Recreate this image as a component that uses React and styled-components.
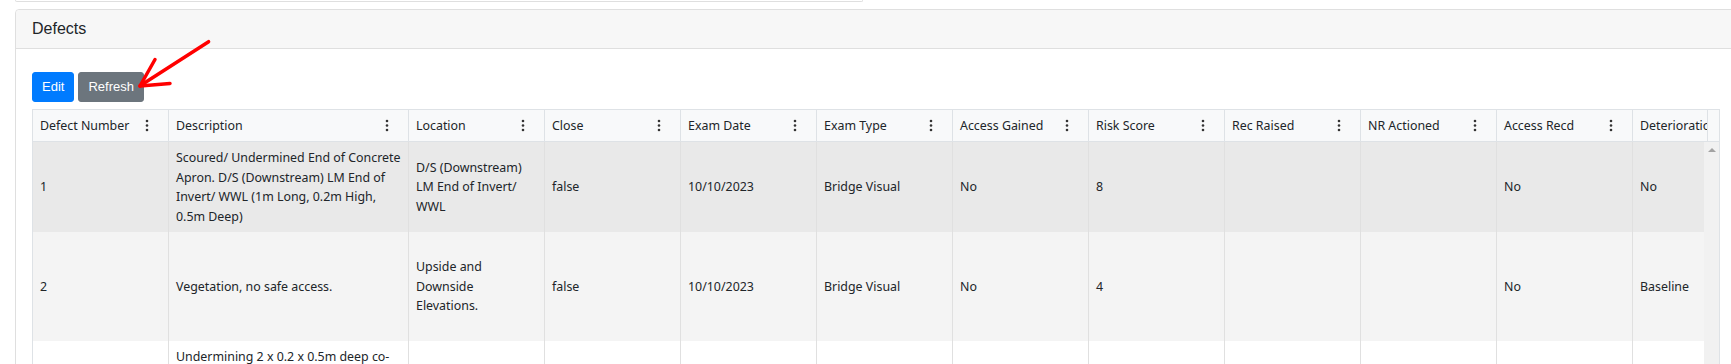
import React from "react";
import styled, { createGlobalStyle } from "styled-components";

const GlobalStyle = createGlobalStyle`
  * {
    box-sizing: border-box;
    margin: 0;
    padding: 0;
  }
  html, body {
    background: #fff;
    overflow: hidden;
  }
`;

const Page = styled.div`
  position: relative;
  width: 1731px;
  height: 364px;
  overflow: hidden;
  color: #212529;
`;

const TopStub = styled.div`
  width: 848px;
  height: 2px;
  margin-left: 15px;
  border: 1px solid #dfdfdf;
  border-top: 0;
  border-radius: 0 0 4px 4px;
`;

const Card = styled.section`
  width: 1722px;
  margin: 7px 0 0 15px;
  border: 1px solid #dfdfdf;
  border-radius: 4px;
`;

const CardHeader = styled.div`
  background: #f7f7f7;
  border-bottom: 1px solid #dfdfdf;
  border-radius: 4px 4px 0 0;
  padding: 7px 16px;
  font-family: "Liberation Sans", Arial, sans-serif;
  font-size: 16px;
  line-height: 24px;
`;

const CardBody = styled.div`
  padding: 23px 16px 0 16px;
`;

const Toolbar = styled.div`
  display: flex;
  gap: 4px;
  margin-bottom: 7px;
`;

const Button = styled.button`
  font-family: "Liberation Sans", Arial, sans-serif;
  font-size: 13px;
  line-height: 20px;
  padding: 4px 9px;
  border-radius: 3px;
  color: #fff;
  border: 1px solid ${(p) => (p.$variant === "primary" ? "#007bff" : "#6c757d")};
  background: ${(p) => (p.$variant === "primary" ? "#007bff" : "#6c757d")};
  cursor: pointer;
`;

const Grid = styled.div`
  border: 1px solid #dee2e6;
  font-family: "Noto Sans", "Open Sans", sans-serif;
  font-size: 12.4px;
  color: #212529;
`;

const HeaderRow = styled.div`
  display: flex;
  height: 32px;
  background: #f8f9fa;
  border-bottom: 1px solid #dee2e6;
`;

const HeaderScroll = styled.div`
  flex: 1;
  display: flex;
  overflow: hidden;
`;

const HeaderGutter = styled.div`
  flex: 0 0 12px;
  border-left: 1px solid #dee2e6;
`;

const HeaderCell = styled.div`
  flex: 0 0 ${(p) => p.$width}px;
  display: flex;
  align-items: center;
  justify-content: space-between;
  padding: 0 19px 0 7px;
  border-right: 1px solid #dee2e6;
  white-space: nowrap;
  overflow: hidden;
`;

const MenuDots = styled.svg`
  flex: 0 0 4px;
  width: 4px;
  height: 13px;
`;

const Body = styled.div`
  display: flex;
`;

const Rows = styled.div`
  flex: 1;
  overflow: hidden;
`;

const Row = styled.div`
  display: flex;
  min-height: ${(p) => p.$height}px;
  background: ${(p) => p.$bg};
`;

const Cell = styled.div`
  flex: 0 0 ${(p) => p.$width}px;
  display: flex;
  flex-direction: column;
  justify-content: center;
  padding: 6px 7px;
  line-height: 19.5px;
  border-right: 1px solid #e0e0e0;
  white-space: nowrap;
  overflow: hidden;
`;

const Scrollbar = styled.div`
  flex: 0 0 15px;
  background: #f1f1f1;
  display: flex;
  justify-content: center;
  padding-top: 6px;
  &::before {
    content: "";
    width: 0;
    height: 0;
    border-left: 4px solid transparent;
    border-right: 4px solid transparent;
    border-bottom: 4px solid #a3a3a3;
  }
`;

const Arrow = styled.svg`
  position: absolute;
  left: 0;
  top: 0;
  width: 240px;
  height: 110px;
  pointer-events: none;
`;

const columns = [
  { key: "num", label: "Defect Number", width: 136 },
  { key: "desc", label: "Description", width: 240 },
  { key: "loc", label: "Location", width: 136 },
  { key: "close", label: "Close", width: 136 },
  { key: "examDate", label: "Exam Date", width: 136 },
  { key: "examType", label: "Exam Type", width: 136 },
  { key: "accessGained", label: "Access Gained", width: 136 },
  { key: "risk", label: "Risk Score", width: 136 },
  { key: "recRaised", label: "Rec Raised", width: 136 },
  { key: "nrActioned", label: "NR Actioned", width: 136 },
  { key: "accessRecd", label: "Access Recd", width: 136 },
  { key: "deterioration", label: "Deterioration", width: 136 },
];

// only what shows in the visible part of the grid
const defects = [
  {
    height: 90,
    bg: "#e9e9e9",
    num: "1",
    desc: [
      "Scoured/ Undermined End of Concrete",
      "Apron. D/S (Downstream) LM End of",
      "Invert/ WWL (1m Long, 0.2m High,",
      "0.5m Deep)",
    ],
    loc: ["D/S (Downstream)", "LM End of Invert/", "WWL"],
    close: "false",
    examDate: "10/10/2023",
    examType: "Bridge Visual",
    accessGained: "No",
    risk: "8",
    accessRecd: "No",
    deterioration: "No",
  },
  {
    height: 109,
    bg: "#f4f4f4",
    num: "2",
    desc: ["Vegetation, no safe access."],
    loc: ["Upside and", "Downside", "Elevations."],
    close: "false",
    examDate: "10/10/2023",
    examType: "Bridge Visual",
    accessGained: "No",
    risk: "4",
    accessRecd: "No",
    deterioration: "Baseline",
  },
  {
    height: 0,
    bg: "#ffffff",
    desc: ["Undermining 2 x 0.2 x 0.5m deep co-"],
  },
];

const Dots = () => (
  <MenuDots viewBox="0 0 4 13">
    <circle cx="2" cy="2" r="1.3" fill="#333" />
    <circle cx="2" cy="6.5" r="1.3" fill="#333" />
    <circle cx="2" cy="11" r="1.3" fill="#333" />
  </MenuDots>
);

const renderValue = (value) => {
  if (!value) return null;
  return Array.isArray(value)
    ? value.map((line, i) => <span key={i}>{line}</span>)
    : <span>{value}</span>;
};

export default function App() {
  return (
    <Page>
      <GlobalStyle />
      <TopStub />
      <Card>
        <CardHeader>Defects</CardHeader>
        <CardBody>
          <Toolbar>
            <Button $variant="primary">Edit</Button>
            <Button $variant="secondary">Refresh</Button>
          </Toolbar>

          <Grid>
            <HeaderRow>
              <HeaderScroll>
                {columns.map((col) => (
                  <HeaderCell key={col.key} $width={col.width}>
                    <span>{col.label}</span>
                    {col.key !== "deterioration" && <Dots />}
                  </HeaderCell>
                ))}
              </HeaderScroll>
              <HeaderGutter />
            </HeaderRow>

            <Body>
              <Rows>
                {defects.map((item, id) => (
                  <Row key={id} $height={item.height} $bg={item.bg}>
                    {columns.map((col) => (
                      <Cell key={col.key} $width={col.width}>
                        {renderValue(item[col.key])}
                      </Cell>
                    ))}
                  </Row>
                ))}
              </Rows>
              <Scrollbar />
            </Body>
          </Grid>
        </CardBody>
      </Card>

      <Arrow viewBox="0 0 240 110">
        <g stroke="#ff0000" strokeWidth="3.5" strokeLinecap="round" fill="none">
          <line x1="208.6" y1="41.7" x2="140.5" y2="85.5" />
          <line x1="140" y1="86" x2="155" y2="59.5" />
          <line x1="140" y1="86" x2="170" y2="83.5" />
        </g>
      </Arrow>
    </Page>
  );
}
